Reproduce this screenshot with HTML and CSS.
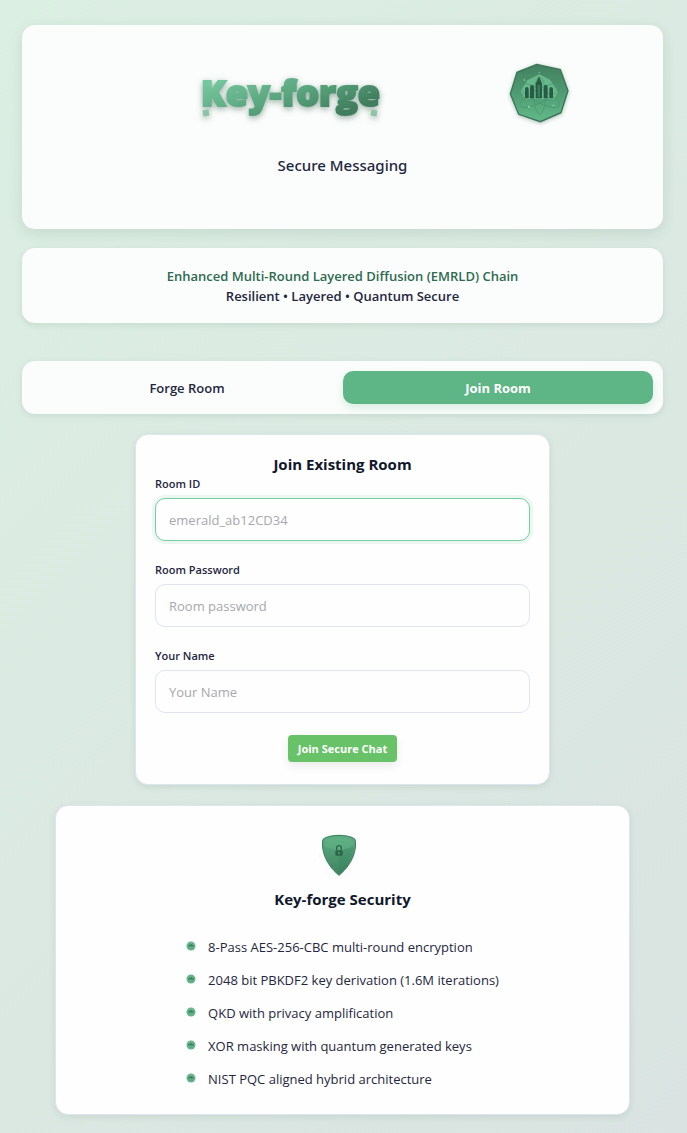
FILE: index.html
```html
<!DOCTYPE html>
<html lang="en">
<head>
<meta charset="utf-8">
<meta name="viewport" content="width=device-width, initial-scale=1">
<title>Key-forge</title>
<link rel="stylesheet" href="styles.css">
</head>
<body>
<svg class="defs" width="0" height="0" aria-hidden="true">
  <symbol id="bullet" viewBox="0 0 10 10">
    <circle cx="5" cy="5" r="4.5" fill="#68b58c"/>
    <path d="M2.2 4.6L5 3L7.8 4.6V5.4H2.2Z" fill="#3d7f5f"/>
    <path d="M2.4 6.6Q5 8 7.6 6.6" fill="none" stroke="#4b9a72" stroke-width=".6"/>
  </symbol>
</svg>
<main class="page">
  <header class="card hero">
    <div class="brand">
      <h1 class="logo">Key-forge</h1>
      <svg class="emblem" viewBox="27 24 180 180" role="img" aria-label="Key-forge emblem">
        <defs>
          <linearGradient id="gem" x1="0" y1="0" x2="0" y2="1">
            <stop offset="0" stop-color="#42805f"/><stop offset=".5" stop-color="#4f9b73"/><stop offset="1" stop-color="#62ba88"/>
          </linearGradient>
        </defs>
        <path d="M110 28L181 44L204 107L183 173L121 200L56 178L31 117L51 52Z" fill="url(#gem)" stroke="#3b7557" stroke-width="4"/>
        <path d="M118 58L150 74L174 110L162 132H76L62 108L82 76Z" fill="#72c598" opacity=".75"/>
        <g fill="none" stroke="#45936b" stroke-width="2.5" opacity=".75">
          <ellipse cx="119" cy="122" rx="17" ry="56"/>
          <ellipse cx="119" cy="122" rx="20" ry="66" transform="rotate(62 119 122)"/>
          <ellipse cx="119" cy="122" rx="20" ry="66" transform="rotate(-62 119 122)"/>
        </g>
        <path d="M75 130V102L77 97H84L86 102V130ZM90 130V96L93 90H99L102 96V130ZM107 130V85L111 79L113 73L117 65L121 73L123 79L126 85V130ZM131 130V96L134 90H140L143 96V130ZM148 130V102L150 97H157L159 102V130Z" fill="#285b43"/>
        <path d="M113 90H120V126H113Z" fill="#3f7c5d"/>
        <g fill="#8fd5ae"><circle cx="73" cy="75" r="2.5"/><circle cx="87" cy="155" r="3"/><circle cx="160" cy="151" r="2.5"/><circle cx="118" cy="52" r="2"/></g>
      </svg>
    </div>
    <p class="tagline">Secure Messaging</p>
  </header>

  <section class="card banner">
    <p class="banner-title">Enhanced Multi-Round Layered Diffusion (EMRLD) Chain</p>
    <p>Resilient • Layered • Quantum Secure</p>
  </section>

  <nav class="card tabs">
    <button class="tab" type="button">Forge Room</button>
    <button class="tab tab-active" type="button">Join Room</button>
  </nav>

  <form class="card join">
    <h2 class="heading">Join Existing Room</h2>
    <div class="field">
      <label for="room">Room ID</label>
      <input class="input-active" id="room" type="text" placeholder="emerald_ab12CD34">
    </div>
    <div class="field">
      <label for="password">Room Password</label>
      <input id="password" type="password" placeholder="Room password">
    </div>
    <div class="field">
      <label for="name">Your Name</label>
      <input id="name" type="text" placeholder="Your Name">
    </div>
    <button class="submit" type="button">Join Secure Chat</button>
  </form>

  <section class="card security">
    <svg class="shield" viewBox="8 -4 144 144" aria-hidden="true">
      <defs>
        <linearGradient id="guard" x1="0" y1="0" x2="0" y2="1">
          <stop offset="0" stop-color="#5cae82"/><stop offset="1" stop-color="#3e8361"/>
        </linearGradient>
      </defs>
      <g fill="none" stroke="#edf3ef" stroke-width="1.5">
        <ellipse cx="68" cy="74" rx="22" ry="62" transform="rotate(30 68 74)"/>
        <ellipse cx="68" cy="74" rx="22" ry="62" transform="rotate(-30 68 74)"/>
        <ellipse cx="68" cy="74" rx="60" ry="20"/>
      </g>
      <path d="M68 12C84 12 106 15 116 24C122 50 112 96 68 132C24 96 14 50 20 24C30 15 52 12 68 12Z" fill="url(#guard)" stroke="#397a59" stroke-width="3"/>
      <path d="M24 27Q68 10 112 27L109 46L68 58L27 46Z" fill="#66b58a" opacity=".45"/>
      <path d="M68 58V128C94 108 108 78 111 46Z" fill="#2f7250" opacity=".2"/>
      <path d="M61 57V49Q61 43 68 43T75 49V57" fill="none" stroke="#2d674a" stroke-width="4"/>
      <rect x="57" y="57" width="22" height="16" rx="2" fill="#2d674a"/>
      <circle cx="68" cy="65" r="3" fill="#539775"/>
    </svg>
    <h2 class="heading">Key-forge Security</h2>
    <ul class="features">
      <li><svg class="bullet"><use href="#bullet"/></svg>8-Pass AES-256-CBC multi-round encryption</li>
      <li><svg class="bullet"><use href="#bullet"/></svg>2048 bit PBKDF2 key derivation (1.6M iterations)</li>
      <li><svg class="bullet"><use href="#bullet"/></svg>QKD with privacy amplification</li>
      <li><svg class="bullet"><use href="#bullet"/></svg>XOR masking with quantum generated keys</li>
      <li><svg class="bullet"><use href="#bullet"/></svg>NIST PQC aligned hybrid architecture</li>
    </ul>
  </section>
</main>
</body>
</html>
```
FILE: styles.css
```css
* { box-sizing: border-box; }
body {
  margin: 0;
  min-height: 100vh;
  background: linear-gradient(135deg, #dcefe3, #dae3e1);
  color: #1f2640;
  font-family: "Open Sans", "Noto Sans", sans-serif;
  font-size: 13px;
}
h1, h2, p, ul { margin: 0; padding: 0; }
button, input { font: inherit; color: inherit; }
.defs { position: absolute; }
.page {
  display: flex;
  flex-direction: column;
  padding: 25px 24px 18px 22px;
}
.card {
  background: #fbfdfc;
  border-radius: 13px;
  box-shadow: 0 2px 6px rgba(30, 80, 60, .1);
}
.hero {
  padding: 36px 16px 52px;
  text-align: center;
  box-shadow: 0 4px 14px rgba(30, 80, 60, .12);
}
.brand {
  display: flex;
  align-items: center;
  justify-content: center;
  gap: 129px;
  padding-left: 85px;
}
.logo {
  position: relative;
  font-size: 36px;
  font-weight: 800;
  line-height: 64px;
  background: linear-gradient(160deg, #74c69d 20%, #5aa67e 50%, #3f7d5d 80%);
  -webkit-background-clip: text;
  background-clip: text;
  color: transparent;
  -webkit-text-stroke: 2px transparent;
  filter: drop-shadow(0 2px 3px rgba(45, 90, 70, .5));
}
.logo::before, .logo::after {
  content: "";
  position: absolute;
  bottom: 9px;
  width: 6px;
  height: 6px;
  background: #8fc3a8;
}
.logo::before { left: 2px; transform: rotate(-8deg); }
.logo::after { right: 3px; transform: rotate(8deg); }
.emblem {
  width: 60px;
  height: 60px;
  filter: drop-shadow(0 1px 2px rgba(30, 80, 60, .35));
}
.tagline {
  margin-top: 28px;
  font-size: 15px;
  font-weight: 500;
  font-family: "Noto Sans", "Open Sans", sans-serif;
  line-height: 24px;
}
.banner {
  margin-top: 19px;
  padding: 18px 16px 17px;
  font-weight: 600;
  line-height: 20px;
  text-align: center;
}
.banner-title { color: #2d6a4f; }
.tabs {
  display: flex;
  gap: 1px;
  margin-top: 38px;
  padding: 10px;
}
.tab {
  flex: 1;
  height: 33px;
  padding: 0;
  border: 0;
  border-radius: 10px;
  background: none;
  font-weight: 600;
}
.tab-active {
  background: #5eb585;
  color: #fff;
  font-weight: 700;
  box-shadow: 0 4px 10px rgba(94, 181, 133, .22);
}
.join {
  display: flex;
  flex-direction: column;
  width: 100%;
  max-width: 415px;
  margin: 20px auto 0;
  padding: 18px 19px 22px;
  border: 1px solid #dfe5ee;
  background: #fefefe;
}
.heading {
  color: #11172b;
  font-size: 15px;
  font-weight: 700;
  line-height: 22px;
  text-align: center;
}
.field {
  display: flex;
  flex-direction: column;
  gap: 5px;
  margin-bottom: 20px;
}
.field label {
  font-size: 11px;
  font-weight: 600;
  line-height: 18px;
}
.field input {
  width: 100%;
  height: 43px;
  padding: 0 13px;
  border: 1px solid #e0e4ee;
  border-radius: 10px;
  background: #fefefe;
  outline: 0;
}
.field input::placeholder { color: #a6a8ae; opacity: 1; }
.field .input-active {
  border-color: #74cf9f;
  box-shadow: 0 0 0 3px #edf7f1;
}
.submit {
  align-self: center;
  height: 27px;
  margin-top: 2px;
  padding: 0 10px;
  border: 0;
  border-radius: 4px;
  background: #68c268;
  color: #fff;
  font-size: 11px;
  font-weight: 700;
  box-shadow: 0 4px 10px rgba(0, 0, 0, .08);
}
.security {
  display: flex;
  flex-direction: column;
  align-items: center;
  margin: 20px 33px 0;
  padding: 24px 16px 18px;
  border: 1px solid #dfe5ee;
  background: #fefefe;
}
.shield { width: 48px; height: 48px; }
.security .heading { margin-top: 10px; }
.features {
  display: flex;
  flex-direction: column;
  margin-top: 21px;
  list-style: none;
}
.features li {
  display: flex;
  align-items: center;
  gap: 12px;
  line-height: 33px;
}
.bullet { width: 10px; height: 10px; margin-bottom: 4px; }
```
